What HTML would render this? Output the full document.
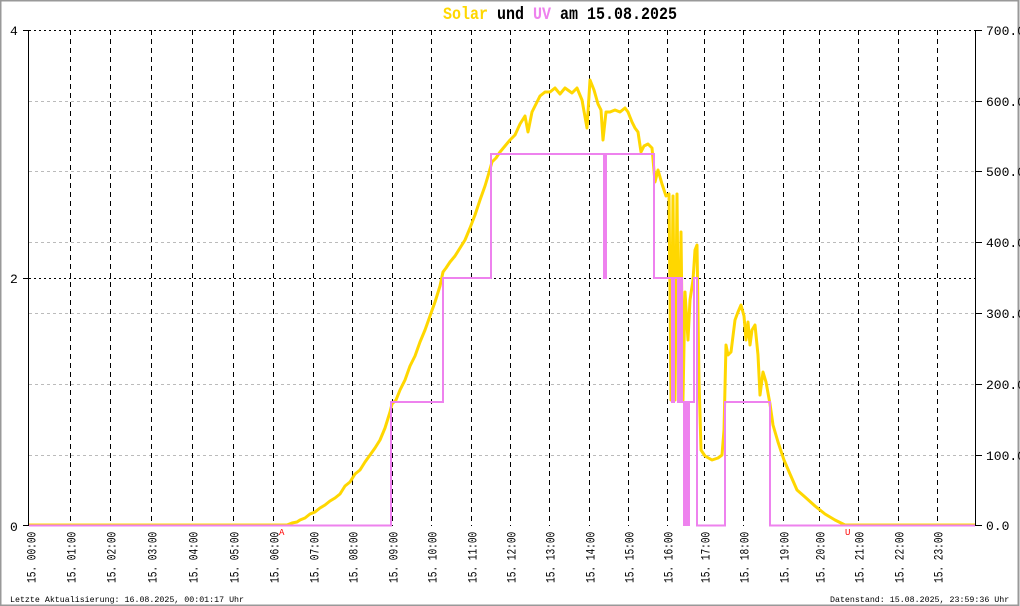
<!DOCTYPE html>
<html><head><meta charset="utf-8"><style>
html,body{margin:0;padding:0;background:#fff;}
svg{display:block;}
text{font-family:"Liberation Mono","DejaVu Sans Mono",monospace;}
</style></head><body>
<svg width="1020" height="606" viewBox="0 0 1020 606" xmlns="http://www.w3.org/2000/svg">
<rect x="0" y="0" width="1020" height="606" fill="#fff"/>
<rect x="0.5" y="0.5" width="1018" height="605" fill="none" stroke="#999" stroke-width="2"/>
<text x="443" y="19" font-size="15" transform="translate(0,-3) scale(1,1.15)" style="font-weight:bold"><tspan fill="#FFD700">Solar</tspan> und <tspan fill="#EE82EE">UV</tspan> am 15.08.2025</text>
<g stroke="#bbb" stroke-width="1" stroke-dasharray="3,3">
<line x1="29" y1="101.5" x2="975" y2="101.5"/><line x1="29" y1="171.5" x2="975" y2="171.5"/>
<line x1="29" y1="242.5" x2="975" y2="242.5"/><line x1="29" y1="313.5" x2="975" y2="313.5"/>
<line x1="29" y1="384.5" x2="975" y2="384.5"/><line x1="29" y1="455.5" x2="975" y2="455.5"/>
</g>
<g stroke="#000" stroke-width="1" stroke-dasharray="2,3">
<line x1="29" y1="30.5" x2="975" y2="30.5"/><line x1="29" y1="278.5" x2="975" y2="278.5"/>
</g>
<g stroke="#000" stroke-width="1" stroke-dasharray="5,4">
<line x1="70.5" y1="30" x2="70.5" y2="526"/><line x1="110.5" y1="30" x2="110.5" y2="526"/>
<line x1="151.5" y1="30" x2="151.5" y2="526"/><line x1="192.5" y1="30" x2="192.5" y2="526"/>
<line x1="233.5" y1="30" x2="233.5" y2="526"/><line x1="273.5" y1="30" x2="273.5" y2="526"/>
<line x1="313.5" y1="30" x2="313.5" y2="526"/><line x1="352.5" y1="30" x2="352.5" y2="526"/>
<line x1="392.5" y1="30" x2="392.5" y2="526"/><line x1="431.5" y1="30" x2="431.5" y2="526"/>
<line x1="471.5" y1="30" x2="471.5" y2="526"/><line x1="510.5" y1="30" x2="510.5" y2="526"/>
<line x1="549.5" y1="30" x2="549.5" y2="526"/><line x1="589.5" y1="30" x2="589.5" y2="526"/>
<line x1="628.5" y1="30" x2="628.5" y2="526"/><line x1="667.5" y1="30" x2="667.5" y2="526"/>
<line x1="704.5" y1="30" x2="704.5" y2="526"/><line x1="743.5" y1="30" x2="743.5" y2="526"/>
<line x1="783.5" y1="30" x2="783.5" y2="526"/><line x1="819.5" y1="30" x2="819.5" y2="526"/>
<line x1="858.5" y1="30" x2="858.5" y2="526"/><line x1="898.5" y1="30" x2="898.5" y2="526"/>
<line x1="937.5" y1="30" x2="937.5" y2="526"/>
</g>
<g stroke="#000" stroke-width="1">
<line x1="28.5" y1="30" x2="28.5" y2="526"/><line x1="975.5" y1="30" x2="975.5" y2="526"/>
<line x1="23" y1="30.5" x2="29" y2="30.5"/><line x1="23" y1="278.5" x2="29" y2="278.5"/><line x1="23" y1="525.5" x2="29" y2="525.5"/>
<line x1="975" y1="30.5" x2="982" y2="30.5"/><line x1="975" y1="101.5" x2="982" y2="101.5"/><line x1="975" y1="171.5" x2="982" y2="171.5"/>
<line x1="975" y1="242.5" x2="982" y2="242.5"/><line x1="975" y1="313.5" x2="982" y2="313.5"/><line x1="975" y1="384.5" x2="982" y2="384.5"/>
<line x1="975" y1="455.5" x2="982" y2="455.5"/><line x1="975" y1="525.5" x2="982" y2="525.5"/>
</g>
<g font-size="13" fill="#000">
<text x="10" y="35">4</text><text x="10" y="283">2</text><text x="10" y="531">0</text>
<text x="986" y="35">700.0</text><text x="986" y="106">600.0</text><text x="986" y="176">500.0</text>
<text x="986" y="247">400.0</text><text x="986" y="318">300.0</text><text x="986" y="389">200.0</text>
<text x="986" y="460">100.0</text><text x="986" y="530">0.0</text>
</g>
<polyline fill="none" stroke="#FFD700" stroke-width="3" stroke-linejoin="round" points="29,525 287,525 292,523 297,522 300,520 305,518 310,514 315,512 320,508 325,505 330,501 335,498 340,494 345,486 350,482 355,474 360,470 365,462 370,455 375,448 380,440 385,428 390,412 392,404 396,400 400,390 405,380 410,366 415,356 420,342 425,330 430,316 435,302 440,286 443,272 446,268 450,262 455,256 460,248 465,240 470,228 475,215 480,200 485,186 488,176 492,162 496,158 500,152 505,146 510,140 515,135 520,124 525,116 528,132 532,112 536,104 540,96 545,92 550,92 555,88 560,94 565,88 572,93 577,88 582,100 587,128 590,80 594,90 598,104 601,110 603,140 606,112 610,112 615,110 620,112 625,108 628,112 632,122 635,128 638,132 641,152 644,146 648,144 652,148 655,182 658,170 662,184 666,196 669,194 671,400 673,196 675,400 677,194 679,400 681,232 683,400 685,292 688,340 690,300 693,280 695,250 697,245 699,380 701,450 705,456 712,460 718,458 722,455 724,430 726,345 728,355 731,352 735,320 738,312 741,305 744,316 746,340 748,322 750,345 752,330 755,325 758,355 760,395 763,372 766,382 770,404 773,425 778,442 784,460 790,474 797,490 805,497 815,506 825,514 835,520 845,525 975,525"/>
<polyline fill="none" stroke="#EE82EE" stroke-width="2" points="29,525.5 391,525.5 391,402 443,402 443,278 491,278 491,154 604,154 604,278 606,278 606,154 654,154 654,278 672,278 672,402 674,402 674,278 678,278 678,402 680,402 680,278 682,278 682,402 684,402 684,525 686,525 686,402 688,402 688,525 689,525 689,402 694,402 694,278 697,278 697,525.5 725,525.5 725,402 770,402 770,525.5 975,525.5"/>
<text x="279" y="535" font-size="9" fill="#f00">A</text>
<text x="845" y="535" font-size="9" fill="#f00">U</text>
<g font-size="9.5" fill="#000">
<text transform="translate(35.5,583) rotate(-90) scale(1,1.35)">15. 00:00</text>
<text transform="translate(75.5,583) rotate(-90) scale(1,1.35)">15. 01:00</text>
<text transform="translate(115.5,583) rotate(-90) scale(1,1.35)">15. 02:00</text>
<text transform="translate(156.5,583) rotate(-90) scale(1,1.35)">15. 03:00</text>
<text transform="translate(197.5,583) rotate(-90) scale(1,1.35)">15. 04:00</text>
<text transform="translate(238.5,583) rotate(-90) scale(1,1.35)">15. 05:00</text>
<text transform="translate(278.5,583) rotate(-90) scale(1,1.35)">15. 06:00</text>
<text transform="translate(318.5,583) rotate(-90) scale(1,1.35)">15. 07:00</text>
<text transform="translate(357.5,583) rotate(-90) scale(1,1.35)">15. 08:00</text>
<text transform="translate(397.5,583) rotate(-90) scale(1,1.35)">15. 09:00</text>
<text transform="translate(436.5,583) rotate(-90) scale(1,1.35)">15. 10:00</text>
<text transform="translate(476.5,583) rotate(-90) scale(1,1.35)">15. 11:00</text>
<text transform="translate(515.5,583) rotate(-90) scale(1,1.35)">15. 12:00</text>
<text transform="translate(554.5,583) rotate(-90) scale(1,1.35)">15. 13:00</text>
<text transform="translate(594.5,583) rotate(-90) scale(1,1.35)">15. 14:00</text>
<text transform="translate(633.5,583) rotate(-90) scale(1,1.35)">15. 15:00</text>
<text transform="translate(672.5,583) rotate(-90) scale(1,1.35)">15. 16:00</text>
<text transform="translate(709.5,583) rotate(-90) scale(1,1.35)">15. 17:00</text>
<text transform="translate(748.5,583) rotate(-90) scale(1,1.35)">15. 18:00</text>
<text transform="translate(788.5,583) rotate(-90) scale(1,1.35)">15. 19:00</text>
<text transform="translate(824.5,583) rotate(-90) scale(1,1.35)">15. 20:00</text>
<text transform="translate(863.5,583) rotate(-90) scale(1,1.35)">15. 21:00</text>
<text transform="translate(903.5,583) rotate(-90) scale(1,1.35)">15. 22:00</text>
<text transform="translate(942.5,583) rotate(-90) scale(1,1.35)">15. 23:00</text>
</g>
<text x="10" y="602" font-size="8.3" fill="#000">Letzte Aktualisierung: 16.08.2025, 00:01:17 Uhr</text>
<text x="830" y="602" font-size="8.3" fill="#000">Datenstand: 15.08.2025, 23:59:36 Uhr</text>
</svg>
</body></html>
